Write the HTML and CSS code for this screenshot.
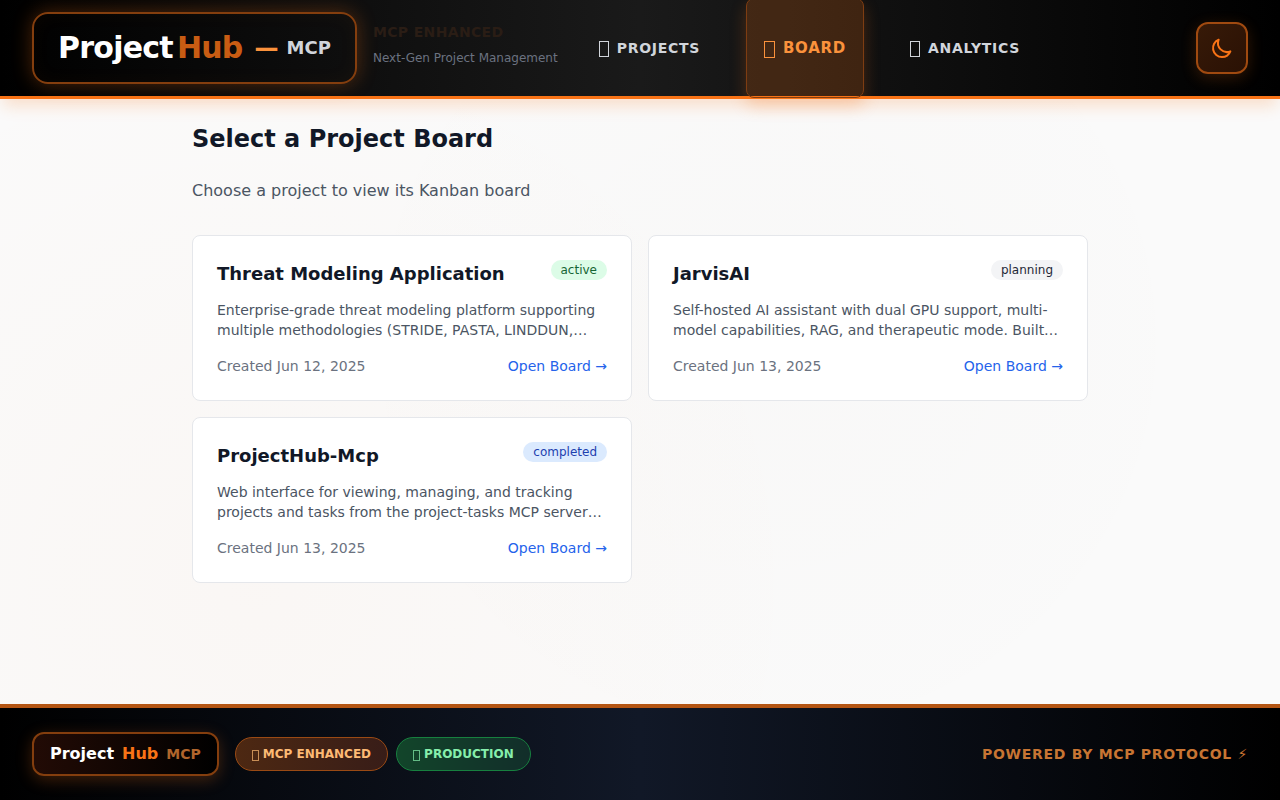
FILE: index.html
```html
<!DOCTYPE html>
<html lang="en">
<head>
<meta charset="utf-8">
<meta name="viewport" content="width=device-width, initial-scale=1">
<title>ProjectHub - MCP</title>
<link rel="stylesheet" href="styles.css">
</head>
<body>
<header class="header">
  <div class="brand">
    <div class="logo">
      <span class="logo-name">Project</span>
      <span class="logo-hub">Hub</span>
      <span class="logo-dash">—</span>
      <span class="logo-mcp">MCP</span>
    </div>
    <div class="tagline">
      <span class="tagline-title">MCP ENHANCED</span>
      <span class="tagline-text">Next-Gen Project Management</span>
    </div>
  </div>
  <nav class="nav" aria-label="Main">
    <a class="nav-item" href="#projects"><span class="nav-icon" aria-hidden="true"></span><span>PROJECTS</span></a>
    <a class="nav-item nav-item-active" href="#board" aria-current="page"><span class="nav-icon" aria-hidden="true"></span><span>BOARD</span></a>
    <a class="nav-item" href="#analytics"><span class="nav-icon" aria-hidden="true"></span><span>ANALYTICS</span></a>
  </nav>
  <button class="theme-toggle" type="button" aria-label="Switch to dark mode">
    <svg width="24" height="24" viewBox="0 0 24 24" fill="none" stroke="currentColor" stroke-width="2" stroke-linecap="round" stroke-linejoin="round" aria-hidden="true"><path d="M20.354 15.354A9 9 0 018.646 3.646 9.003 9.003 0 0012 21a9.003 9.003 0 008.354-5.646z"/></svg>
  </button>
</header>

<main class="main">
  <div class="container">
    <h1 class="title">Select a Project Board</h1>
    <p class="intro">Choose a project to view its Kanban board</p>
    <div class="cards">
      <article class="card">
        <div class="card-head">
          <h2 class="card-title">Threat Modeling Application</h2>
          <span class="status status-active">active</span>
        </div>
        <p class="card-text">Enterprise-grade threat modeling platform supporting multiple methodologies (STRIDE, PASTA, LINDDUN,…</p>
        <div class="card-foot"><span>Created Jun 12, 2025</span><a class="card-link" href="#threat-modeling">Open Board →</a></div>
      </article>
      <article class="card">
        <div class="card-head">
          <h2 class="card-title">JarvisAI</h2>
          <span class="status status-planning">planning</span>
        </div>
        <p class="card-text">Self-hosted AI assistant with dual GPU support, multi-model capabilities, RAG, and therapeutic mode. Built…</p>
        <div class="card-foot"><span>Created Jun 13, 2025</span><a class="card-link" href="#jarvis">Open Board →</a></div>
      </article>
      <article class="card">
        <div class="card-head">
          <h2 class="card-title">ProjectHub-Mcp</h2>
          <span class="status status-completed">completed</span>
        </div>
        <p class="card-text">Web interface for viewing, managing, and tracking projects and tasks from the project-tasks MCP server…</p>
        <div class="card-foot"><span>Created Jun 13, 2025</span><a class="card-link" href="#projecthub">Open Board →</a></div>
      </article>
    </div>
  </div>
</main>

<footer class="footer">
  <div class="footer-left">
    <div class="footer-logo">
      <span>Project</span>
      <span class="footer-hub">Hub</span>
      <span class="footer-mcp">MCP</span>
    </div>
    <div class="pills">
      <span class="pill pill-mcp"><span class="pill-icon" aria-hidden="true"></span>MCP ENHANCED</span>
      <span class="pill pill-production"><span class="pill-icon" aria-hidden="true"></span>PRODUCTION</span>
    </div>
  </div>
  <div class="powered">POWERED BY MCP PROTOCOL ⚡</div>
</footer>
</body>
</html>
```
FILE: styles.css
```css
* {
  box-sizing: border-box;
}

body {
  margin: 0;
  min-height: 100vh;
  display: flex;
  flex-direction: column;
  font-family: "DejaVu Sans", sans-serif;
  font-size: 16px;
  line-height: 24px;
  color: #111827;
  background: #fafafa;
}

h1, h2, p {
  margin: 0;
}

a {
  text-decoration: none;
}

/* Header */
.header {
  position: relative;
  z-index: 1;
  display: flex;
  align-items: center;
  padding: 0 32px;
  background: linear-gradient(90deg, #000, #1a1a1a 50%, #000);
  border-bottom: 3px solid #f97316;
  box-shadow: 0 10px 15px -3px rgba(249, 115, 22, 0.2);
}

.brand {
  display: flex;
  align-items: center;
  gap: 16px;
  padding: 12px 0;
}

.logo {
  display: flex;
  align-items: center;
  padding: 16px 24px;
  border: 2px solid #843e0e;
  border-radius: 16px;
  font-weight: 700;
  line-height: 36px;
  white-space: nowrap;
  box-shadow: 0 0 20px rgba(249, 115, 22, 0.3), inset 0 0 20px rgba(249, 115, 22, 0.04);
}

.logo-name,
.logo-hub {
  font-size: 30px;
  letter-spacing: -0.025em;
}

.logo-name {
  color: #fff;
}

.logo-hub {
  margin-left: 4px;
  color: #c85c13;
}

.logo-dash {
  margin: 0 8px 0 12px;
  font-size: 24px;
  color: #fb923c;
}

.logo-mcp {
  font-size: 18px;
  color: #d1d5db;
}

.tagline {
  display: flex;
  flex-direction: column;
  gap: 8px;
  padding-bottom: 8px;
  white-space: nowrap;
}

.tagline-title {
  font-size: 14px;
  line-height: 20px;
  font-weight: 700;
  letter-spacing: 0.025em;
  color: #2a1d15;
}

.tagline-text {
  font-size: 12px;
  line-height: 16px;
  color: #6b7280;
}

.nav {
  display: flex;
  align-self: stretch;
  gap: 32px;
  margin-left: 24px;
}

.nav-item {
  display: flex;
  align-items: center;
  gap: 8px;
  padding: 0 16px;
  border: 1px solid transparent;
  border-radius: 8px;
  font-size: 14px;
  font-weight: 700;
  letter-spacing: 0.05em;
  color: #d1d5db;
}

.nav-icon {
  width: 10px;
  height: 16px;
  margin-top: 2px;
  border: 1px solid;
}

.nav-item-active {
  margin: -2px -3px;
  padding: 0 17px;
  font-size: 15px;
  color: #fb923c;
  background: rgba(249, 115, 22, 0.2);
  border-color: #7e3d12;
  box-shadow: 0 8px 16px rgba(249, 115, 22, 0.25);
}

.nav-item-active .nav-icon {
  width: 11px;
  height: 17px;
}

.theme-toggle {
  display: flex;
  margin: 0 0 0 auto;
  padding: 12px;
  border: 2px solid #a04a10;
  border-radius: 12px;
  color: #f97316;
  background: linear-gradient(135deg, #371a08, #2a1104);
  box-shadow: 0 4px 16px rgba(249, 115, 22, 0.2);
  cursor: pointer;
}

/* Board picker */
.main {
  flex: 1;
  padding: 24px 32px;
  background:
    radial-gradient(circle at 20% 80%, rgba(249, 115, 22, 0.025), transparent 50%),
    radial-gradient(circle at 60% 40%, rgba(120, 80, 40, 0.012), transparent 55%),
    #fafafa;
}

.container {
  max-width: 896px;
  margin: 0 auto;
}

.title {
  font-size: 24px;
  line-height: 32px;
  font-weight: 700;
}

.intro {
  margin: 24px 0 32px;
  color: #4b5563;
}

.cards {
  display: grid;
  grid-template-columns: repeat(2, minmax(0, 1fr));
  gap: 16px;
}

.card {
  padding: 24px;
  border: 1px solid #e5e7eb;
  border-radius: 8px;
  background: #fff;
  font-size: 14px;
  line-height: 20px;
}

.card-head,
.card-foot {
  display: flex;
  justify-content: space-between;
  align-items: flex-start;
}

.card-title {
  font-size: 18px;
  line-height: 28px;
  font-weight: 700;
}

.status {
  padding: 2px 10px;
  border-radius: 10px;
  font-size: 12px;
  line-height: 16px;
}

.status-active {
  color: #166534;
  background: #dcfce7;
}

.status-planning {
  color: #1f2937;
  background: #f3f4f6;
}

.status-completed {
  color: #1e40af;
  background: #dbeafe;
}

.card-text {
  margin: 12px 0 16px;
  color: #4b5563;
}

.card-foot {
  color: #6b7280;
}

.card-link {
  color: #2563eb;
}

/* Footer */
.footer {
  display: flex;
  justify-content: space-between;
  align-items: center;
  padding: 24px 32px;
  border-top: 4px solid #b45513;
  background: linear-gradient(90deg, #000, #111827 50%, #000);
  font-weight: 700;
}

.footer-left {
  display: flex;
  align-items: center;
  gap: 16px;
}

.footer-logo {
  display: flex;
  align-items: center;
  gap: 8px;
  padding: 8px 16px;
  border: 2px solid #843e0e;
  border-radius: 12px;
  color: #fff;
  background: linear-gradient(90deg, #220b05, #000);
  box-shadow: 0 4px 16px rgba(249, 115, 22, 0.25);
}

.footer-hub {
  color: #f97316;
}

.footer-mcp {
  font-size: 14px;
  color: #b0652c;
}

.pills {
  display: flex;
  gap: 8px;
}

.pill {
  display: flex;
  align-items: center;
  gap: 4px;
  padding: 8px 16px;
  border: 1px solid;
  border-radius: 17px;
  font-size: 12px;
  line-height: 16px;
  white-space: nowrap;
}

.pill-icon {
  width: 7px;
  height: 11px;
  margin-top: 2px;
  border: 1px solid;
  opacity: 0.7;
}

.pill-mcp {
  color: #fdba74;
  border-color: #9a4a14;
  background: linear-gradient(90deg, #4d2812, #381d18);
}

.pill-production {
  color: #86efac;
  border-color: #17803f;
  background: linear-gradient(90deg, #12452a, #122e2a);
}

.powered {
  font-size: 14px;
  line-height: 20px;
  letter-spacing: 0.05em;
  color: #c87533;
}
```
